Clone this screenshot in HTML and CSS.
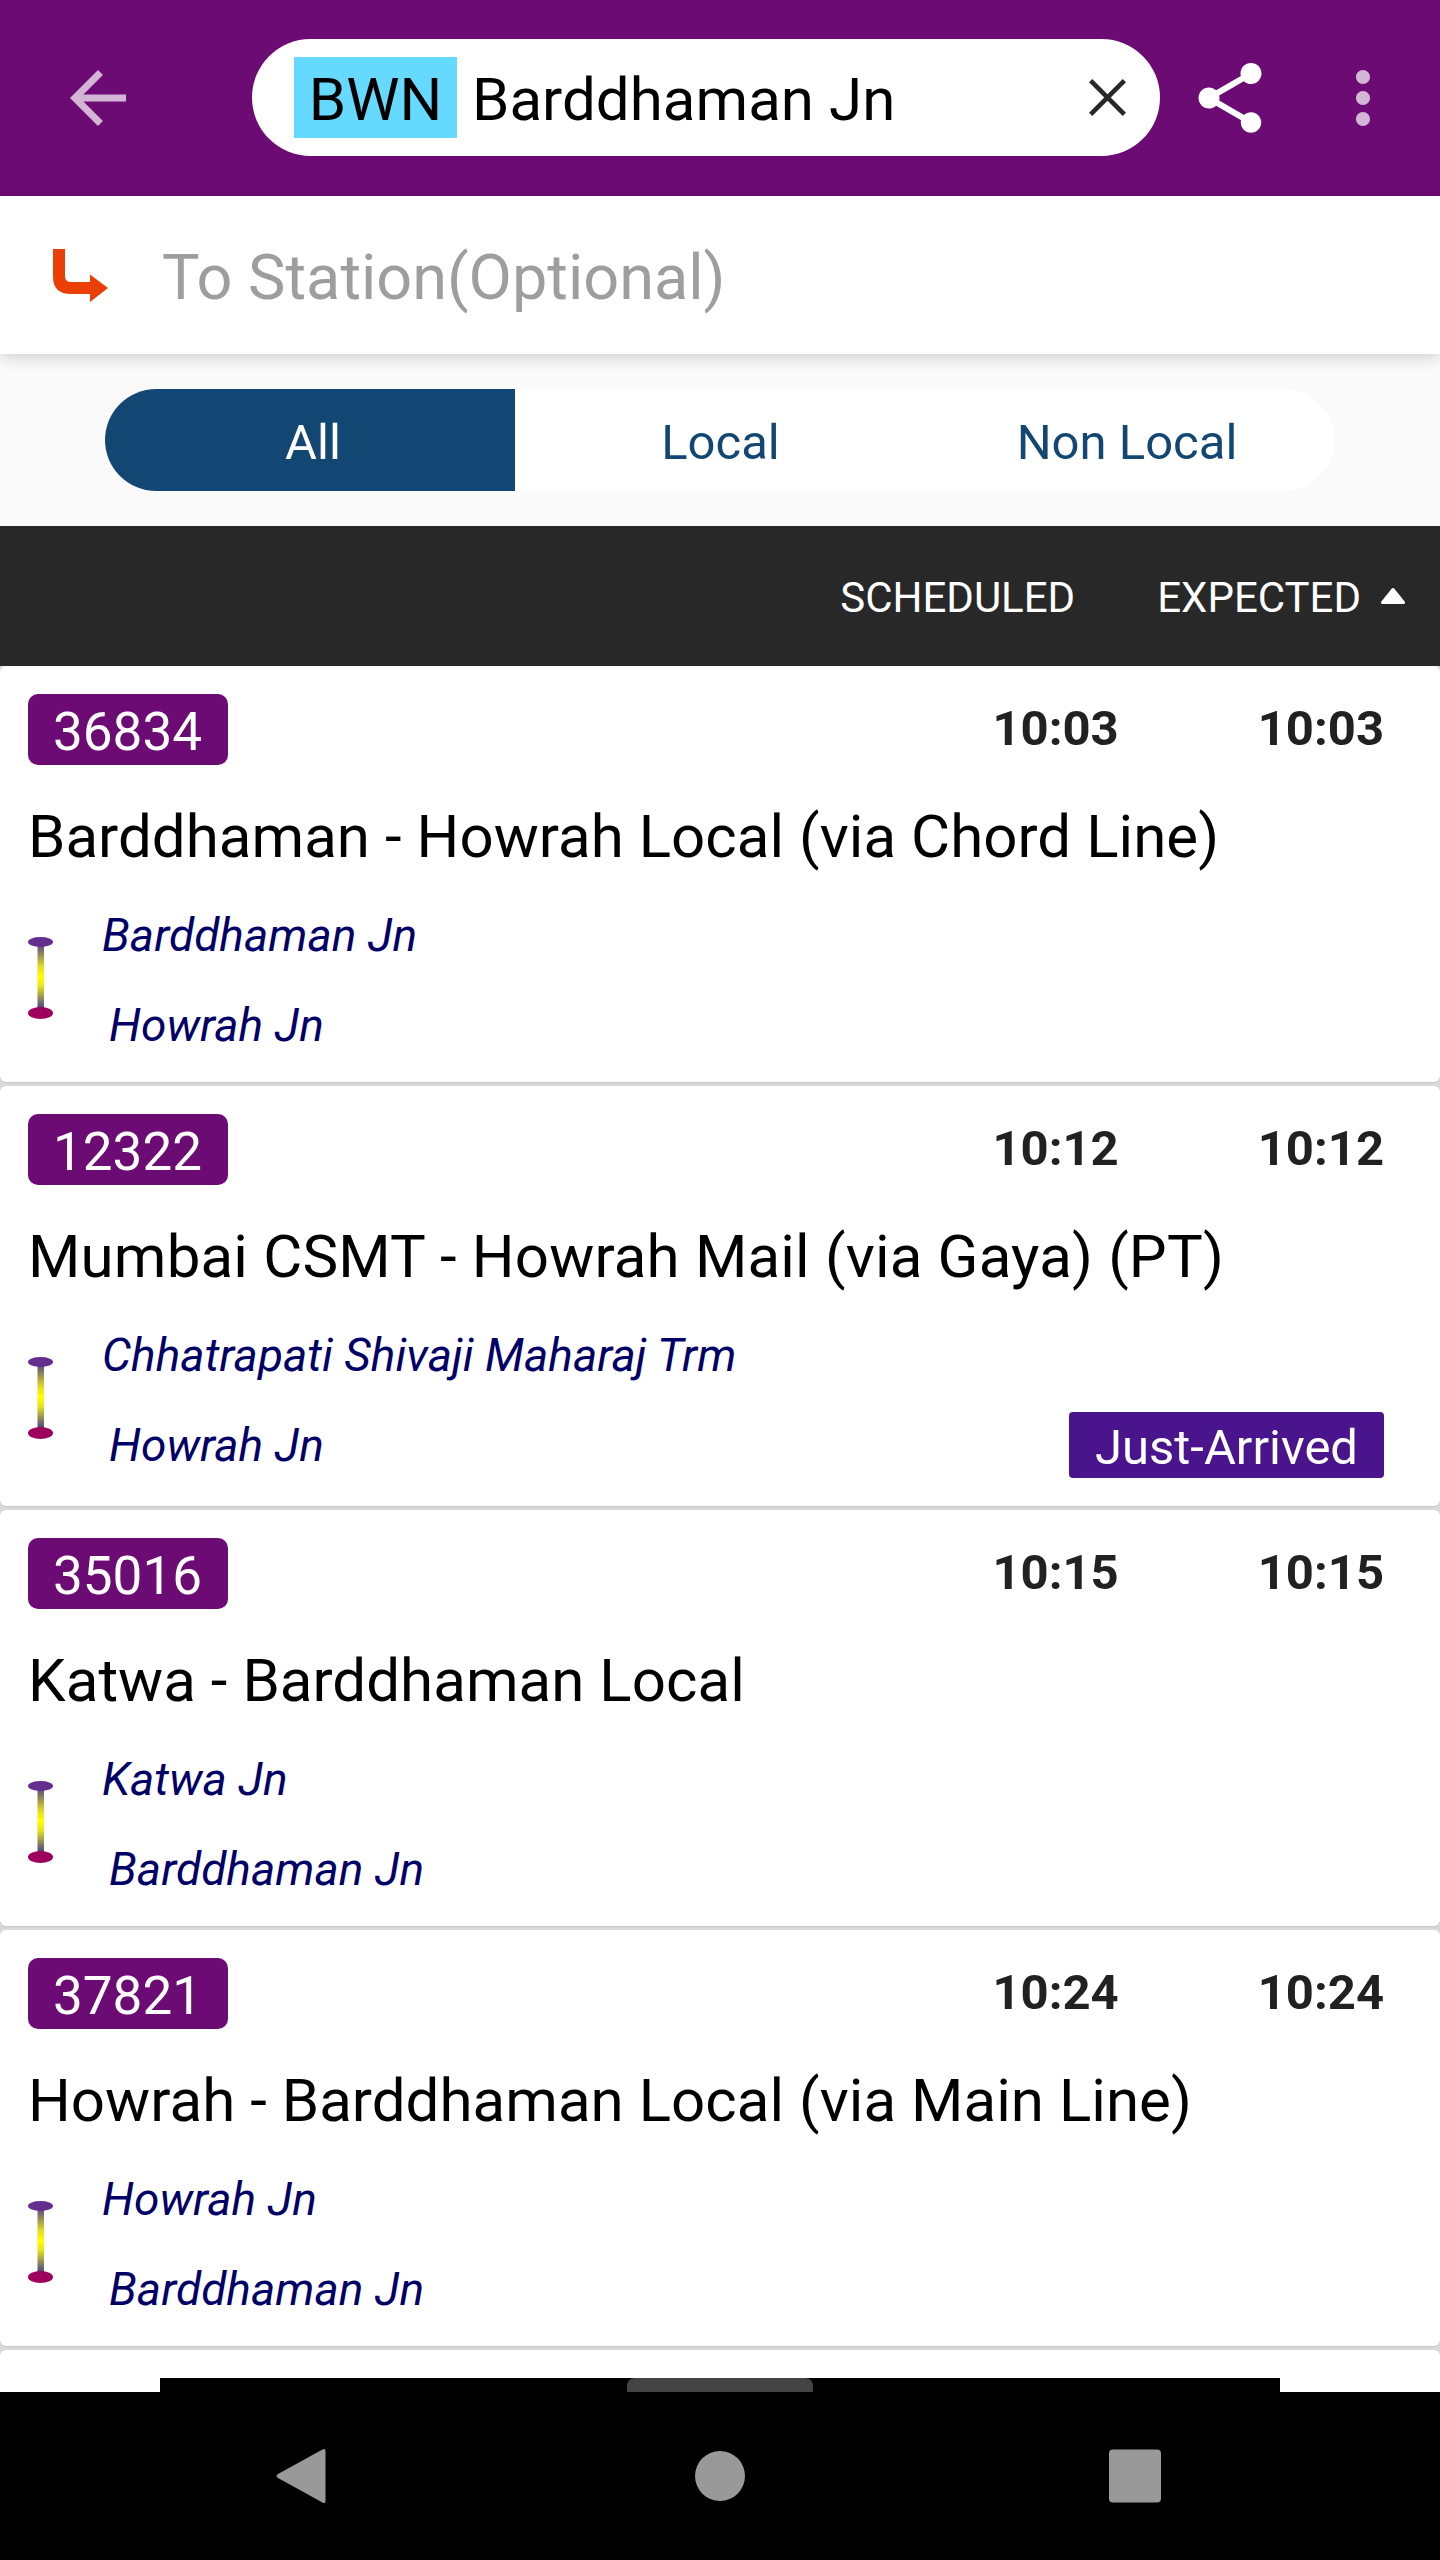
FILE: index.html
```html
<!DOCTYPE html>
<html lang="en">
<head>
<meta charset="utf-8">
<title>Barddhaman Jn - Live Station</title>
<link rel="stylesheet" href="styles.css">
</head>
<body>
<svg class="defs" width="0" height="0" aria-hidden="true">
  <defs>
    <linearGradient id="track" x1="0" y1="0" x2="0" y2="1">
      <stop offset="0" stop-color="#5b4a80"/>
      <stop offset=".35" stop-color="#e6e020"/>
      <stop offset=".5" stop-color="#ffff00"/>
      <stop offset=".65" stop-color="#e6e020"/>
      <stop offset="1" stop-color="#403c88"/>
    </linearGradient>
    <symbol id="route" viewBox="0 0 25 82">
      <rect x="9.500" y="8" width="6.500" height="64" fill="url(#track)"/>
      <ellipse cx="12.500" cy="5" rx="12.500" ry="5" fill="#662d91"/>
      <ellipse cx="12.500" cy="76" rx="12.500" ry="6" fill="#9e005d"/>
    </symbol>
  </defs>
</svg>
<div class="screen">
  <header class="toolbar">
    <svg class="icon back" viewBox="0 0 24 24"><path d="M20 11H7.83l5.59-5.59L12 4l-8 8 8 8 1.41-1.41L7.83 13H20v-2z"/></svg>
    <div class="search">
      <span class="code">BWN</span>
      <span class="station">Barddhaman Jn</span>
      <svg class="clear" viewBox="0 0 36 36"><path d="M1.6 1.6l32.8 32.8M34.4 1.6L1.6 34.4"/></svg>
    </div>
    <svg class="icon share" viewBox="0 0 24 24"><path d="M18 16.08c-.76 0-1.44.3-1.96.77L8.91 12.7c.05-.23.09-.46.09-.7s-.04-.47-.09-.7l7.05-4.11c.54.5 1.25.81 2.04.81 1.66 0 3-1.34 3-3s-1.34-3-3-3-3 1.34-3 3c0 .24.04.47.09.7L8.04 9.81C7.5 9.31 6.79 9 6 9c-1.66 0-3 1.34-3 3s1.34 3 3 3c.79 0 1.5-.31 2.04-.81l7.12 4.16c-.05.21-.08.43-.08.65 0 1.61 1.31 2.92 2.92 2.92s2.92-1.31 2.92-2.92-1.31-2.92-2.92-2.92z"/></svg>
    <svg class="icon more" viewBox="0 0 24 24"><path d="M12 8c1.1 0 2-.9 2-2s-.9-2-2-2-2 .9-2 2 .9 2 2 2zm0 2c-1.1 0-2 .9-2 2s.9 2 2 2 2-.9 2-2-.9-2-2-2zm0 6c-1.1 0-2 .9-2 2s.9 2 2 2 2-.9 2-2-.9-2-2-2z"/></svg>
  </header>
  <div class="destination">
    <svg class="turn" viewBox="0 0 55 53"><path d="M0 0H12V27Q12 33 18 33H37V25.500L55 39 37 53V45H18Q0 45 0 28Z"/></svg>
    <span class="placeholder">To Station(Optional)</span>
  </div>
  <div class="filter">
    <div class="segments">
      <span class="segment active">All</span>
      <span class="segment">Local</span>
      <span class="segment last">Non Local</span>
    </div>
  </div>
  <div class="columns">
    <span class="scheduled-label">SCHEDULED</span>
    <span class="expected-label">EXPECTED</span>
    <svg class="sort" viewBox="0 0 24 16"><path d="M12 1.500L22.500 14.500H1.500Z"/></svg>
  </div>
  <main class="trains">
    <article class="card">
      <div class="top"><span class="number">36834</span><span class="time">10:03</span><span class="time expected">10:03</span></div>
      <div class="name">Barddhaman - Howrah Local (via Chord Line)</div>
      <div class="bottom"><svg class="route"><use href="#route"/></svg><div class="stops"><span>Barddhaman Jn</span><span class="to">Howrah Jn</span></div></div>
    </article>
    <article class="card">
      <div class="top"><span class="number">12322</span><span class="time">10:12</span><span class="time expected">10:12</span></div>
      <div class="name wide">Mumbai CSMT - Howrah Mail (via Gaya) (PT)</div>
      <div class="bottom"><svg class="route"><use href="#route"/></svg><div class="stops"><span>Chhatrapati Shivaji Maharaj Trm</span><span class="to">Howrah Jn</span></div><span class="status">Just-Arrived</span></div>
    </article>
    <article class="card">
      <div class="top"><span class="number">35016</span><span class="time">10:15</span><span class="time expected">10:15</span></div>
      <div class="name">Katwa - Barddhaman Local</div>
      <div class="bottom"><svg class="route"><use href="#route"/></svg><div class="stops"><span>Katwa Jn</span><span class="to">Barddhaman Jn</span></div></div>
    </article>
    <article class="card">
      <div class="top"><span class="number">37821</span><span class="time">10:24</span><span class="time expected">10:24</span></div>
      <div class="name">Howrah - Barddhaman Local (via Main Line)</div>
      <div class="bottom"><svg class="route"><use href="#route"/></svg><div class="stops"><span>Howrah Jn</span><span class="to">Barddhaman Jn</span></div></div>
    </article>
    <article class="card next"><div class="banner"><div class="handle"></div></div></article>
  </main>
  <nav class="system">
    <svg viewBox="0 0 56 56"><path d="M49.500 1.500Q52.500 0 52.500 3V53Q52.500 56 49.500 54.500L5 30Q2 28 5 26Z"/></svg>
    <svg viewBox="0 0 56 56"><circle cx="30" cy="28" r="25"/></svg>
    <svg viewBox="0 0 56 56"><rect x="2" y="1.500" width="52" height="53" rx="4"/></svg>
  </nav>
</div>
</body>
</html>
```
FILE: styles.css
```css
* { box-sizing: border-box; }
body { margin: 0; background: #000; font-family: Roboto, sans-serif; }
.defs { position: absolute; }
.screen { width: 1440px; height: 2560px; display: flex; flex-direction: column; overflow: hidden; white-space: nowrap; background: #fafafa; }
.screen > * { flex: none; }
svg { display: block; flex: none; }

.toolbar { height: 196px; display: flex; align-items: center; padding-left: 56px; background: #6c0b73; }
.icon { width: 84px; height: 84px; fill: #fff; }
.back, .more { fill: #d3b6d5; }
.search { width: 908px; height: 117px; margin: 0 28px 1px 112px; padding: 0 34px 0 42px; border-radius: 58.5px; display: flex; align-items: center; background: #fff; font-size: 60px; color: #000; }
.code { height: 81px; width: 163px; text-align: center; line-height: 86px; background: #66d9ff; }
.station { line-height: 86px; padding: 5px 0 0 15px; flex: 1; letter-spacing: .05px; }
.clear { width: 37px; height: 37px; fill: none; stroke: #282828; stroke-width: 4.5; }
.more { margin-left: 49px; }

.destination { height: 158px; display: flex; align-items: center; padding-left: 53px; background: #fff; box-shadow: 0 4px 14px rgba(0,0,0,.16); z-index: 1; }
.turn { width: 55px; height: 53px; fill: #eb3f08; }
.placeholder { margin-left: 54px; padding-top: 6px; font-size: 63px; line-height: 80px; color: #9e9e9e; }

.filter { height: 172px; padding: 35px 105px; }
.segments { height: 102px; border-radius: 51px; overflow: hidden; display: grid; grid-template-columns: repeat(3, 410px); background: #fff; }
.segment { text-align: center; font-size: 49px; line-height: 107px; color: #124773; padding-left: 1px; }
.segment.active { background: #124773; color: #fff; padding-left: 6px; }
.segment.last { padding-right: 7px; }

.columns { height: 140px; padding-right: 35px; display: flex; justify-content: flex-end; align-items: center; background: #282828; color: #fff; font-size: 42px; line-height: 60px; }
.columns span { padding-top: 4px; }
.expected-label { margin-left: 82px; }
.sort { width: 24px; height: 18px; margin-left: 20px; fill: #fff; stroke: #fff; stroke-width: 3; stroke-linejoin: round; }

.trains { height: 1726px; display: flex; flex-direction: column; gap: 4px; overflow: hidden; background: #dadada; }
.card { flex: none; padding: 28px 56px 28px 28px; border-radius: 6px; background: #fff; box-shadow: 0 1px 2px rgba(0,0,0,.1); }
.top { height: 71px; display: flex; }
.number { width: 200px; height: 71px; padding: 5px 1px 0 0; border-radius: 10px; text-align: center; font-size: 53px; line-height: 66px; background: #6c0b73; color: #fff; }
.time { margin-left: auto; font-size: 49px; font-weight: 700; line-height: 70px; color: #212121; }
.time.expected { margin-left: 139px; }
.name { padding-top: 30px; font-size: 60px; line-height: 83px; letter-spacing: .05px; color: #000; }
.name.wide { letter-spacing: .19px; }
.bottom { display: flex; }
.route { width: 25px; height: 82px; margin-top: 59px; }
.stops { height: 176px; padding: 27px 0 0 49px; display: flex; flex-direction: column; gap: 30px; font-size: 46px; font-style: italic; line-height: 60px; letter-spacing: .05px; color: #006; }
.stops .to { padding-left: 7px; }
.status { width: 315px; height: 66px; margin: 114px 0 0 auto; padding-top: 4px; border-radius: 4px; text-align: center; font-size: 49px; line-height: 63px; background: #4a148c; color: #fff; }
.card.next { height: 60px; border-radius: 6px 6px 0 0; padding: 28px 160px 0; }
.banner { height: 14px; display: flex; justify-content: center; background: #000; }
.handle { width: 186px; border-radius: 8px 8px 0 0; background: #444; }

.system { height: 168px; padding: 0 277px 0 273px; display: flex; justify-content: space-between; align-items: center; background: #000; }
.system svg { width: 56px; height: 56px; fill: #999; }
```
